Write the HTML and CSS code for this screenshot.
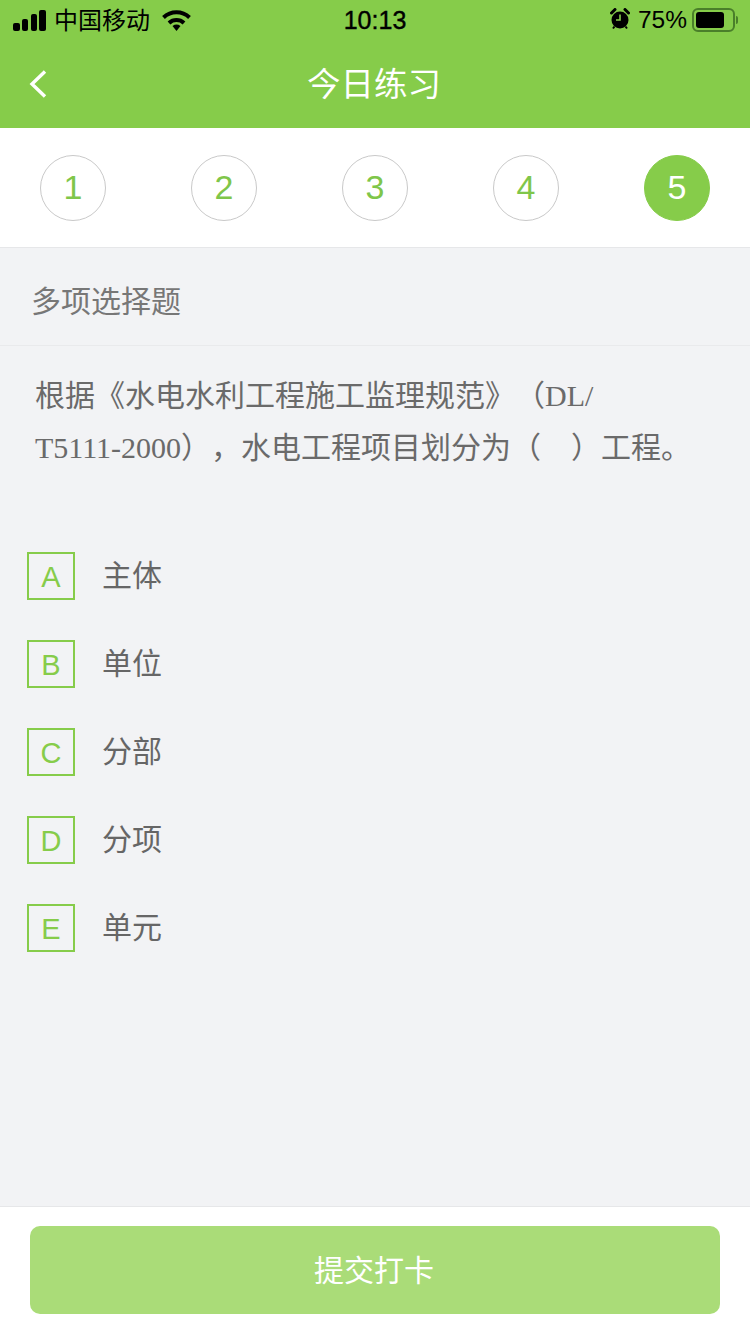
FILE: index.html
```html
<!DOCTYPE html>
<html lang="zh-CN">
<head>
    <meta charset="UTF-8">
    <meta name="viewport" content="width=device-width, initial-scale=1.0">
    <title>今日练习</title>
    <link rel="stylesheet" href="styles.css">
</head>
<body>
    <div class="app">
        <header class="header">
            <div class="status-bar">
                <div class="status-left">
                    <svg class="signal" width="33" height="21" viewBox="0 0 33 21">
                        <rect x="0" y="13" width="7" height="8" rx="2"/>
                        <rect x="9" y="9" width="6" height="12" rx="2"/>
                        <rect x="18" y="4" width="6" height="17" rx="2"/>
                        <rect x="26" y="0" width="7" height="21" rx="2"/>
                    </svg>
                    <span class="carrier">中国移动</span>
                    <svg class="wifi" width="29" height="21" viewBox="0 0 29 21">
                        <path d="M1.5 7.5 A19 19 0 0 1 27.5 7.5" fill="none" stroke="#000" stroke-width="4"/>
                        <path d="M7 13 A11 11 0 0 1 22 13" fill="none" stroke="#000" stroke-width="4"/>
                        <path d="M10.5 16 A7 7 0 0 1 18.5 16 L14.5 21 Z"/>
                    </svg>
                </div>
                <div class="status-time">10:13</div>
                <div class="status-right">
                    <svg class="alarm" width="20" height="22" viewBox="0 0 20 22">
                        <circle cx="10" cy="12" r="8.5"/>
                        <path d="M1.5 5 L5 1.5 M15 1.5 L18.5 5" stroke="#000" stroke-width="3" stroke-linecap="round"/>
                        <path d="M3 20.5 L4.5 18.5 M17 20.5 L15.5 18.5" stroke="#000" stroke-width="2"/>
                        <path d="M10 6.5 V12 H6" fill="none" stroke="#86cc4a" stroke-width="1.6"/>
                    </svg>
                    <span class="battery-text">75%</span>
                    <div class="battery">
                        <div class="battery-fill"></div>
                    </div>
                    <div class="battery-nub"></div>
                </div>
            </div>
            <div class="nav-bar">
                <svg class="back" width="18" height="28" viewBox="0 0 18 28">
                    <path d="M16 1.5 L3 14 L16 26.5" fill="none" stroke="#fff" stroke-width="3.4"/>
                </svg>
                <h1 class="nav-title">今日练习</h1>
            </div>
        </header>

        <div class="steps">
            <div class="step">1</div>
            <div class="step">2</div>
            <div class="step">3</div>
            <div class="step">4</div>
            <div class="step step-active">5</div>
        </div>

        <main class="main">
            <div class="type-label">多项选择题</div>
            <p class="question">根据《水电水利工程施工监理规范》（DL/<br>T5111-2000），水电工程项目划分为（　）工程。</p>
            <div class="options">
                <div class="option"><span class="option-key">A</span><span class="option-text">主体</span></div>
                <div class="option"><span class="option-key">B</span><span class="option-text">单位</span></div>
                <div class="option"><span class="option-key">C</span><span class="option-text">分部</span></div>
                <div class="option"><span class="option-key">D</span><span class="option-text">分项</span></div>
                <div class="option"><span class="option-key">E</span><span class="option-text">单元</span></div>
            </div>
        </main>

        <footer class="footer">
            <button class="submit" type="button">提交打卡</button>
        </footer>
    </div>
</body>
</html>
```

FILE: styles.css
```css
/* Basic styling */
* {
    box-sizing: border-box;
}
body {
    margin: 0;
    font-family: "Liberation Sans", "Noto Sans CJK SC", sans-serif;
    background-color: #f2f3f5;
    text-spacing-trim: space-all;
}
.app {
    width: 750px;
    height: 1334px;
    display: flex;
    flex-direction: column;
    overflow: hidden;
}

/* Header */
.header {
    height: 128px;
    background-color: #86cc4a;
}
.status-bar {
    height: 40px;
    display: grid;
    grid-template-columns: 1fr auto 1fr;
    align-items: center;
    color: #000;
}
.status-left {
    display: flex;
    align-items: center;
    padding-left: 13px;
}
.carrier {
    margin-left: 8px;
    padding-bottom: 4px;
    font-size: 24px;
}
.wifi {
    margin-left: 12px;
}
.status-time {
    font-size: 25px;
    -webkit-text-stroke: 0.4px #000;
}
.status-right {
    display: flex;
    align-items: center;
    justify-content: flex-end;
    padding-right: 12px;
}
.alarm {
    margin-top: -2px;
}
.battery-text {
    margin-left: 8px;
    font-size: 24.5px;
}
.battery {
    width: 43px;
    height: 24px;
    margin-left: 5px;
    padding: 2px;
    border: 2px solid #4a7f2a;
    border-radius: 6px;
}
.battery-fill {
    width: 28px;
    height: 100%;
    background-color: #000;
    border-radius: 3px;
}
.battery-nub {
    width: 2px;
    height: 8px;
    margin-left: 1px;
    background-color: #4a7f2a;
    border-radius: 0 2px 2px 0;
}
.nav-bar {
    height: 88px;
    display: flex;
    align-items: center;
    justify-content: center;
    position: relative;
}
.back {
    position: absolute;
    left: 29px;
    top: 30px;
}
.nav-title {
    margin: 0;
    padding: 0 2px 6px 0;
    color: #fff;
    font-size: 33.5px;
    font-weight: 400;
}

/* Steps */
.steps {
    height: 120px;
    padding: 0 40px;
    display: flex;
    align-items: center;
    justify-content: space-between;
    background-color: #fff;
    border-bottom: 1px solid #e6e7e9;
}
.step {
    width: 66px;
    height: 66px;
    display: flex;
    align-items: center;
    justify-content: center;
    border: 1px solid #c9c9c9;
    border-radius: 50%;
    color: #7fc64a;
    font-size: 34px;
}
.step-active {
    background-color: #86cc4a;
    border-color: #86cc4a;
    color: #fff;
}

/* Question */
.main {
    flex: 1;
}
.type-label {
    height: 98px;
    padding: 4px 0 0 31px;
    display: flex;
    align-items: center;
    border-bottom: 1px solid #e9eaec;
    color: #777;
    font-size: 30px;
}
.question {
    margin: 24px 0 0;
    padding: 0 35px;
    color: #6a6a6a;
    font-family: "Liberation Serif", "Noto Sans CJK SC", serif;
    font-size: 30px;
    line-height: 52px;
    white-space: nowrap;
}
.options {
    margin-top: 78px;
    padding-left: 27px;
    display: flex;
    flex-direction: column;
    gap: 40px;
}
.option {
    height: 48px;
    display: flex;
    align-items: center;
    gap: 27px;
}
.option-key {
    width: 48px;
    height: 48px;
    padding-top: 3px;
    display: flex;
    align-items: center;
    justify-content: center;
    border: 2px solid #86cc4a;
    color: #86cc4a;
    font-size: 29px;
}
.option-text {
    padding-bottom: 6px;
    color: #666;
    font-size: 30px;
}

/* Footer */
.footer {
    height: 128px;
    padding: 19px 30px 0;
    background-color: #fff;
    border-top: 1px solid #e6e7e9;
}
.submit {
    width: 100%;
    height: 88px;
    padding: 0 2px 4px 0;
    background-color: #aadc78;
    color: #fff;
    border: none;
    border-radius: 10px;
    font-family: inherit;
    font-size: 30px;
}
```
